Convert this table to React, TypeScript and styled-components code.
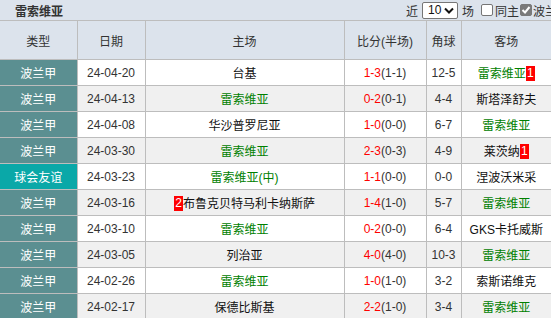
import styled, { createGlobalStyle } from "styled-components";

const GlobalStyle = createGlobalStyle`
  html, body {
    margin: 0;
    padding: 0;
    background: #ffffff;
  }
  body {
    font-family: "Liberation Sans", "Noto Sans CJK SC", sans-serif;
    font-size: 12px;
    color: #333333;
  }
`;

const colors = {
  head: "#dce3ec",
  border: "#bdbdbd",
  league: "#5b8f91",
  friendly: "#0aa8a8",
  stripe: "#f0f0f0",
  green: "#008000",
  red: "#ff0000",
  text: "#333333",
};

const Panel = styled.div`
  width: 551px;
  height: 318px;
  overflow: hidden;
`;

const TitleBar = styled.div`
  display: grid;
  grid-template-columns: 406px 1fr;
  align-items: center;
  height: 20px;
  background: ${colors.head};
  border-bottom: 1px solid ${colors.border};
  white-space: nowrap;
  overflow: hidden;
`;

const Title = styled.div`
  padding-left: 15px;
  font-weight: bold;
  font-size: 12px;
  color: ${colors.text};
`;

const Controls = styled.div`
  display: flex;
  align-items: center;
  gap: 4px;
  font-size: 12px;
  color: ${colors.text};
`;

const FakeSelect = styled.span`
  display: inline-flex;
  align-items: center;
  justify-content: space-between;
  box-sizing: border-box;
  width: 36px;
  height: 17px;
  padding: 0 3px 0 5px;
  background: #ffffff;
  border: 1px solid #767676;
  border-radius: 2px;
  font-size: 12px;
  color: #111;
`;

const Box = styled.span<{ checked?: boolean }>`
  display: inline-flex;
  align-items: center;
  justify-content: center;
  box-sizing: border-box;
  width: 12px;
  height: 12px;
  margin: 0 ${(p) => (p.checked ? "-3px 0 -3px" : "-2px 0 3px")};
  border-radius: 2px;
  border: 1px solid ${(p) => (p.checked ? "#7a7a7a" : "#767676")};
  background: ${(p) => (p.checked ? "#7a7a7a" : "#ffffff")};
`;

const Table = styled.table`
  width: 551px;
  table-layout: fixed;
  border-collapse: collapse;
`;

const HeadCell = styled.th`
  height: 38px;
  padding: 0;
  background: ${colors.head};
  border-right: 1px solid ${colors.border};
  border-bottom: 1px solid ${colors.border};
  font-weight: normal;
  font-size: 12px;
  color: ${colors.text};
  text-align: center;
  &:last-child {
    border-right: none;
  }
`;

const Row = styled.tr<{ stripe: boolean }>`
  background: ${(p) => (p.stripe ? colors.stripe : "#ffffff")};
`;

const Cell = styled.td`
  height: 25px;
  padding: 0;
  border-right: 1px solid ${colors.border};
  border-bottom: 1px solid ${colors.border};
  text-align: center;
  white-space: nowrap;
  overflow: hidden;
  font-size: 12px;
  color: ${colors.text};
  &:last-child {
    border-right: none;
  }
`;

const TypeCell = styled(Cell)<{ friendly?: boolean }>`
  background: ${(p) => (p.friendly ? colors.friendly : colors.league)};
  color: #ffffff;
`;

const Team = styled.span<{ own?: boolean }>`
  color: ${(p) => (p.own ? colors.green : "#111111")};
`;

const Badge = styled.span`
  display: inline-block;
  padding: 0 1px;
  min-width: 7px;
  line-height: 15px;
  background: ${colors.red};
  color: #ffffff;
  font-size: 12px;
  vertical-align: 1px;
`;

const FullTime = styled.span`
  color: ${colors.red};
`;

type Side = { name: string; own?: boolean; badge?: string; badgeFirst?: boolean };

type Match = {
  league: string;
  date: string;
  home: Side;
  ft: string;
  ht: string;
  corners: string;
  away: Side;
};

const OWN = "雷索维亚";

const matches: Match[] = [
  { league: "波兰甲", date: "24-04-20", home: { name: "台基" }, ft: "1-3", ht: "(1-1)", corners: "12-5", away: { name: OWN, own: true, badge: "1" } },
  { league: "波兰甲", date: "24-04-13", home: { name: OWN, own: true }, ft: "0-2", ht: "(0-1)", corners: "4-4", away: { name: "斯塔泽舒夫" } },
  { league: "波兰甲", date: "24-04-08", home: { name: "华沙普罗尼亚" }, ft: "1-0", ht: "(0-0)", corners: "6-7", away: { name: OWN, own: true } },
  { league: "波兰甲", date: "24-03-30", home: { name: OWN, own: true }, ft: "2-3", ht: "(0-3)", corners: "4-9", away: { name: "莱茨纳", badge: "1" } },
  { league: "球会友谊", date: "24-03-23", home: { name: "雷索维亚(中)", own: true }, ft: "1-1", ht: "(0-0)", corners: "0-0", away: { name: "涅波沃米采" } },
  { league: "波兰甲", date: "24-03-16", home: { name: "布鲁克贝特马利卡纳斯萨", badge: "2", badgeFirst: true }, ft: "1-4", ht: "(1-0)", corners: "5-7", away: { name: OWN, own: true } },
  { league: "波兰甲", date: "24-03-10", home: { name: OWN, own: true }, ft: "0-2", ht: "(0-0)", corners: "6-4", away: { name: "GKS卡托威斯" } },
  { league: "波兰甲", date: "24-03-05", home: { name: "列治亚" }, ft: "4-0", ht: "(4-0)", corners: "10-3", away: { name: OWN, own: true } },
  { league: "波兰甲", date: "24-02-26", home: { name: OWN, own: true }, ft: "1-0", ht: "(1-0)", corners: "3-2", away: { name: "索斯诺维克" } },
  { league: "波兰甲", date: "24-02-17", home: { name: "保德比斯基" }, ft: "2-2", ht: "(1-0)", corners: "3-4", away: { name: OWN, own: true } },
];

const widths = [77, 68, 199, 82, 35, 90];
const headers = ["类型", "日期", "主场", "比分(半场)", "角球", "客场"];

const TeamName = ({ side }: { side: Side }) => (
  <>
    {side.badge && side.badgeFirst && <Badge>{side.badge}</Badge>}
    <Team own={side.own}>{side.name}</Team>
    {side.badge && !side.badgeFirst && <Badge>{side.badge}</Badge>}
  </>
);

const Chevron = () => (
  <svg width="10" height="7" viewBox="0 0 10 7">
    <path d="M1 1.5 L5 5.5 L9 1.5" fill="none" stroke="#111" strokeWidth="2" />
  </svg>
);

const Tick = () => (
  <svg width="10" height="10" viewBox="0 0 10 10">
    <path d="M1.5 5 L4 7.5 L8.5 2" fill="none" stroke="#fff" strokeWidth="2" />
  </svg>
);

const App: React.FC = () => (
  <Panel>
    <GlobalStyle />
    <TitleBar>
      <Title>雷索维亚</Title>
      <Controls>
        <span>近</span>
        <FakeSelect>
          10
          <Chevron />
        </FakeSelect>
        <span>场</span>
        <Box />
        <span>同主</span>
        <Box checked>
          <Tick />
        </Box>
        <span>波兰</span>
      </Controls>
    </TitleBar>
    <Table>
      <colgroup>
        {widths.map((w, i) => (
          <col key={i} style={{ width: w }} />
        ))}
      </colgroup>
      <thead>
        <tr>
          {headers.map((h) => (
            <HeadCell key={h}>{h}</HeadCell>
          ))}
        </tr>
      </thead>
      <tbody>
        {matches.map((m, i) => (
          <Row key={m.date} stripe={i % 2 === 1}>
            <TypeCell friendly={m.league === "球会友谊"}>{m.league}</TypeCell>
            <Cell>{m.date}</Cell>
            <Cell>
              <TeamName side={m.home} />
            </Cell>
            <Cell>
              <FullTime>{m.ft}</FullTime>
              {m.ht}
            </Cell>
            <Cell>{m.corners}</Cell>
            <Cell>
              <TeamName side={m.away} />
            </Cell>
          </Row>
        ))}
      </tbody>
    </Table>
  </Panel>
);

export default App;
